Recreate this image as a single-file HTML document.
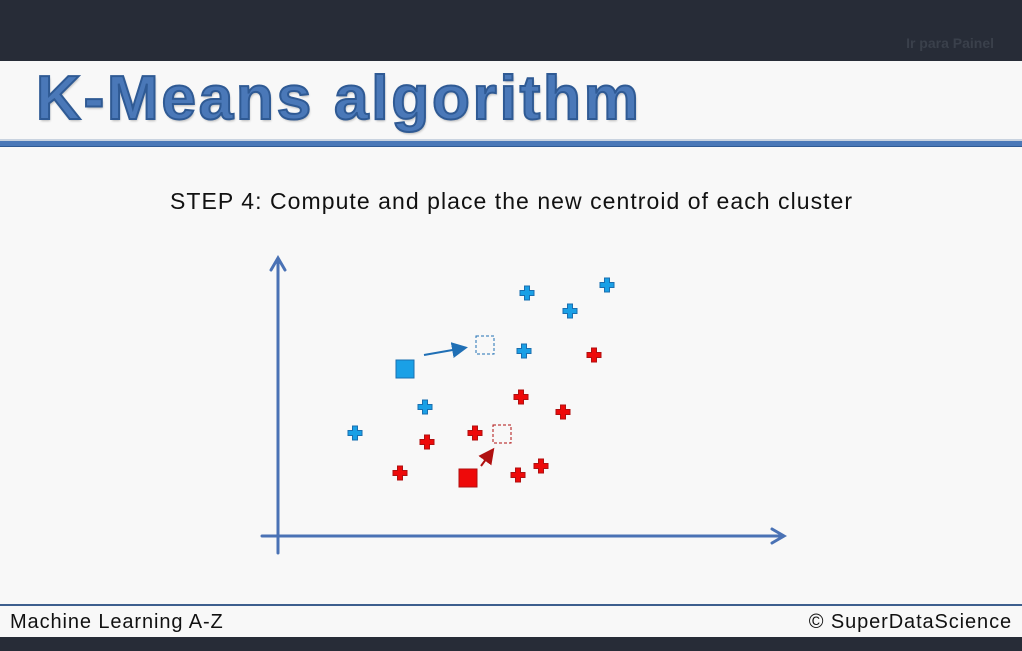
<!DOCTYPE html>
<html><head><meta charset="utf-8"><style>
body{margin:0;width:1022px;height:651px;overflow:hidden;background:#f8f8f8;font-family:"Liberation Sans",sans-serif;position:relative}
.top{position:absolute;left:0;top:0;width:1022px;height:61px;background:#272c37}
.top span{position:absolute;right:28px;top:35px;color:#3a404b;font-size:14px;font-weight:bold}
.title{position:absolute;left:36px;top:63px;font-size:62px;font-weight:bold;color:#4a78b8;-webkit-text-stroke:2px #2f5a94;letter-spacing:2.8px;text-shadow:1px 2px 2px rgba(0,0,0,.25)}
.l1{position:absolute;left:0;top:139px;width:1022px;height:2px;background:#c9d3e0}
.l2{position:absolute;left:0;top:141px;width:1022px;height:5px;background:#4a78b8;border-bottom:1px solid #2f5a94}
.step{position:absolute;left:170px;top:188px;font-size:23px;letter-spacing:1.05px;color:#111}
.fl{position:absolute;left:0;top:604px;width:1022px;height:2px;background:#3d5f8e}
.foot{position:absolute;top:611px;font-size:20px;letter-spacing:0.9px;color:#111}
.bot{position:absolute;left:0;top:637px;width:1022px;height:14px;background:#272c37}
</style></head><body>
<div class="top"><span>Ir para Painel</span></div>
<div class="title">K-Means algorithm</div>
<div class="l1"></div><div class="l2"></div>
<div class="step">STEP 4: Compute and place the new centroid of each cluster</div>
<svg width="1022" height="651" style="position:absolute;left:0;top:0">
<defs>
<path id="c" d="M-2.5,-7h5v4.5h4.5v5h-4.5v4.5h-5v-4.5h-4.5v-5h4.5z"/>
<marker id="ab" markerWidth="8" markerHeight="8" refX="6" refY="4" orient="auto"><path d="M0,0L8,4L0,8z" fill="#1f6fb5"/></marker>
<marker id="ar" markerWidth="8" markerHeight="8" refX="6" refY="4" orient="auto"><path d="M0,0L8,4L0,8z" fill="#b01010"/></marker>
</defs>
<g stroke="#4a72b5" stroke-width="3" fill="none" stroke-linecap="round">
<line x1="278" y1="553" x2="278" y2="262"/><path d="M271,270L278,258L285,270"/>
<line x1="262" y1="536" x2="783" y2="536"/><path d="M772,529L784,536L772,543"/>
</g>
<g fill="#1aa0e6" stroke="#1a6fb0" stroke-width="1">
<use href="#c" x="527" y="293"/><use href="#c" x="570" y="311"/><use href="#c" x="607" y="285"/>
<use href="#c" x="524" y="351"/><use href="#c" x="425" y="407"/><use href="#c" x="355" y="433"/>
</g>
<g fill="#ee0a0a" stroke="#b01010" stroke-width="1">
<use href="#c" x="594" y="355"/><use href="#c" x="521" y="397"/><use href="#c" x="563" y="412"/>
<use href="#c" x="475" y="433"/><use href="#c" x="427" y="442"/><use href="#c" x="400" y="473"/>
<use href="#c" x="518" y="475"/><use href="#c" x="541" y="466"/>
</g>
<rect x="396" y="360" width="18" height="18" fill="#1aa0e6" stroke="#1a6fb0"/>
<rect x="459" y="469" width="18" height="18" fill="#ee0a0a" stroke="#b01010"/>
<rect x="476" y="336" width="18" height="18" fill="none" stroke="#1f6fb5" stroke-dasharray="3,2"/>
<rect x="493" y="425" width="18" height="18" fill="none" stroke="#b01010" stroke-dasharray="3,2"/>
<line x1="424" y1="355" x2="464" y2="348" stroke="#1f6fb5" stroke-width="2" marker-end="url(#ab)"/>
<line x1="481" y1="466" x2="492" y2="451" stroke="#b01010" stroke-width="2" marker-end="url(#ar)"/>
</svg>
<div class="fl"></div>
<div class="foot" style="left:10px">Machine Learning A-Z</div>
<div class="foot" style="right:10px">© SuperDataScience</div>
<div class="bot"></div>
</body></html>
